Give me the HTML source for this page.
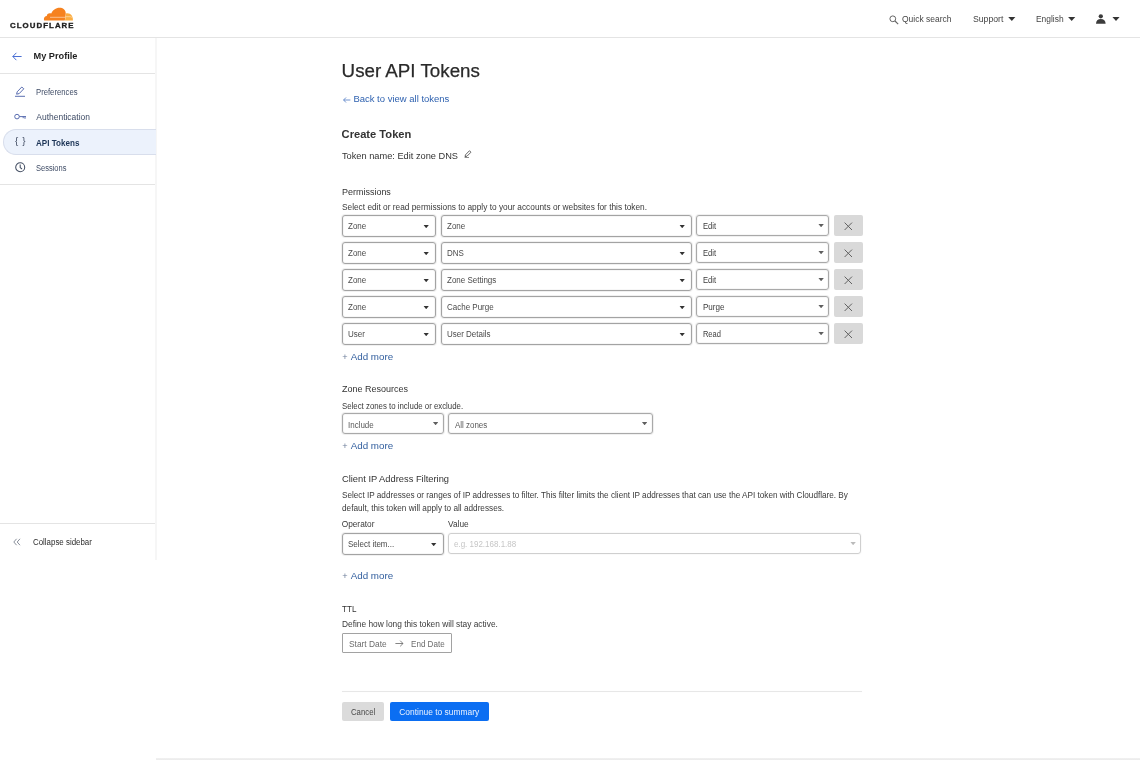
<!DOCTYPE html>
<html>
<head>
<meta charset="utf-8">
<title>User API Tokens</title>
<style>
*{box-sizing:border-box;margin:0;padding:0}
html,body{width:1140px;height:760px;overflow:hidden;background:#fff}
body{font-family:"Liberation Sans",sans-serif;color:#333;position:relative;font-size:8.3px}
.abs{position:absolute;white-space:nowrap;line-height:1}
#wrap{position:absolute;left:0;top:0;width:1140px;height:760px;will-change:transform}
#hdr{position:absolute;left:0;top:0;width:1140px;height:38px;border-bottom:1px solid #e4e4e4;background:#fff}
#side{position:absolute;left:0;top:38px;width:157px;height:522px;border-right:2px solid #f6f6f6;background:#fff}
.hl{position:absolute;left:0;width:155px;height:1px;background:#e4e4e4}
#active{position:absolute;left:3px;top:129px;width:153px;height:26px;border-radius:13px 0 0 13px;background:#ecf2fc;border:1px solid #d8deec;border-right:none}
.tri{position:absolute;width:8px;height:4.4px;background:#333;clip-path:polygon(0 0,100% 0,50% 100%)}
.sel{position:absolute;height:22px;border:1px solid #a3a3a3;border-radius:3px;background:#fff;box-shadow:0 0 0 1px rgba(0,0,0,0.06),inset 0 0 0 1px rgba(0,0,0,0.03)}
.sel span{position:absolute;left:4.8px;top:6.0px;font-size:8.9px;line-height:1;color:#4a4a4a;white-space:nowrap;transform:scaleX(0.9);transform-origin:0 0}
.sel i{position:absolute;right:5.8px;top:8.6px;width:6px;height:3.7px;background:#333;clip-path:polygon(0 0,100% 0,50% 100%)}
.sel.s3{height:21px;border-color:#a9a9a9}
.sel.s3 span{color:#5a5a5a;top:7.2px}
.sel.s3 i{right:4.2px;top:7.9px;width:5.4px;height:3.3px;background:#5e5e5e}
.sel.inp{border-color:#cfcfcf;box-shadow:0 0 0 1px rgba(0,0,0,0.02)}
.sel.s3.inp span{color:#c6c6c6;top:6.2px}
.sel.inp i{background:#bbb}
.xb{position:absolute;left:834.2px;width:28.4px;height:21px;background:#d9d9d9;border-radius:2px}
.xb svg{position:absolute;left:9.9px;top:6.8px}
#date{position:absolute;left:342px;top:633px;width:110px;height:20px;border:1px solid #a2a2a2;border-radius:1px;background:#fff}
#date span{position:absolute;font-size:8.3px;color:#6c6c6c;line-height:1;white-space:nowrap}
.btn{position:absolute;height:19px;border-radius:2px}
.btn span{position:absolute;top:5.6px;line-height:1;white-space:nowrap}
</style>
</head>
<body>
<div id="wrap">
<div id="hdr">
<svg class="abs" style="left:43px;top:7px" width="31" height="14" viewBox="0 0 31 14">
<path d="M1.2 13.6 C0.2 11.2 1.6 9 3.8 8.9 C3.9 6.8 6.2 5.6 8.2 6.6 C9.6 2.4 14.8 -0.5 19 1.1 C22 2.3 23.2 5.2 22.6 8 L21.8 13.6 Z" fill="#f6821f"/>
<path d="M23 6.5 C27.4 5.6 30.2 9 29.9 13.6 L22 13.6 Z" fill="#fbad41"/>
<path d="M7 10.3 L22 10.3" stroke="#fff" stroke-width="0.7" opacity="0.7"/>
<path d="M22.5 9.7 L27.5 9.7 L29 10.4" fill="none" stroke="#fff" stroke-width="0.6" opacity="0.7"/>
</svg>
<div class="abs" style="left:10.1px;top:22.1px;font-size:7.0px;color:#1d1d1d;font-weight:700;letter-spacing:0.95px;transform:scaleX(1.12);transform-origin:0 0;-webkit-text-stroke:0.3px #1d1d1d">CLOUDFLARE</div>

<svg class="abs" style="left:889px;top:15px" width="10" height="10" viewBox="0 0 10 10"><circle cx="3.8" cy="3.8" r="2.9" fill="none" stroke="#666" stroke-width="1"/><path d="M6 6 L9.2 9.2" stroke="#666" stroke-width="1.1"/></svg>
<div class="abs" style="left:902px;top:15.4px;font-size:9.0px;color:#444;transform:scaleX(0.941);transform-origin:0 0">Quick search</div>
<div class="abs" style="left:973.3px;top:15.4px;font-size:9.1px;color:#444;transform:scaleX(0.955);transform-origin:0 0">Support</div>
<div class="tri" style="left:1007.8px;top:16.6px"></div><div class="abs" style="left:1036px;top:15.3px;font-size:9.2px;color:#444;transform:scaleX(0.915);transform-origin:0 0">English</div>
<div class="tri" style="left:1067.7px;top:16.6px"></div>
<svg class="abs" style="left:1096.2px;top:14.2px" width="10" height="10" viewBox="0 0 10 10"><circle cx="4.8" cy="2.3" r="2.15" fill="#3c3c3c"/><path d="M0 9.8 C0 6.6 1.8 4.9 4.8 4.9 C7.8 4.9 9.6 6.6 9.6 9.8 Z" fill="#3c3c3c"/></svg>
<div class="tri" style="left:1112px;top:16.6px"></div>
</div>
<div id="side"></div>
<div class="hl" style="top:73px"></div>
<div class="hl" style="top:184px"></div>
<div class="hl" style="top:523px"></div>
<svg class="abs" style="left:12px;top:51.5px" width="10" height="9" viewBox="0 0 10 9"><path d="M9.6 4.5 L0.8 4.5 M4.4 0.8 L0.8 4.5 L4.4 8.2" fill="none" stroke="#4a6fd3" stroke-width="1"/></svg>
<div class="abs" style="left:33.5px;top:52.3px;font-size:9.2px;color:#1f1f1f;font-weight:700">My Profile</div>

<svg class="abs" style="left:15px;top:86px" width="10" height="11" viewBox="0 0 10 11"><path d="M1.6 8.2 L2.2 5.8 L6.8 1 L8.8 2.8 L4.2 7.6 Z" fill="none" stroke="#4a5fa8" stroke-width="0.9" stroke-linejoin="round"/><path d="M0 10.3 L10 10.3" stroke="#4a5fa8" stroke-width="0.9"/></svg>
<div class="abs" style="left:36.1px;top:87.6px;font-size:8.3px;color:#3f4c66;transform:scaleX(0.928);transform-origin:0 0">Preferences</div>

<svg class="abs" style="left:14px;top:112.5px" width="13" height="8" viewBox="0 0 13 8"><circle cx="3" cy="3.6" r="2.3" fill="none" stroke="#4a5fa8" stroke-width="0.9"/><path d="M5.3 3.6 L12 3.6 M11 3.6 L11 5.8 M9.2 3.6 L9.2 5.2" fill="none" stroke="#4a5fa8" stroke-width="0.9"/></svg>
<div class="abs" style="left:36.3px;top:113.4px;font-size:8.47px;color:#3f4c66">Authentication</div>

<div id="active"></div>
<div class="abs" style="left:15px;top:135.9px;font-size:9.8px;color:#3f4a60;letter-spacing:3.9px">{}</div>
<div class="abs" style="left:36.0px;top:139px;font-size:8.4px;color:#1d3557;font-weight:700;transform:scaleX(0.964);transform-origin:0 0">API Tokens</div>

<svg class="abs" style="left:15px;top:161.7px" width="11" height="11" viewBox="0 0 11 11"><circle cx="5.2" cy="5.2" r="4.5" fill="none" stroke="#434e63" stroke-width="1.05"/><path d="M5.2 2.6 L5.2 5.6 L7 7" fill="none" stroke="#434e63" stroke-width="1.05"/></svg>
<div class="abs" style="left:35.9px;top:163.6px;font-size:8.3px;color:#3f4c66;transform:scaleX(0.905);transform-origin:0 0">Sessions</div>

<svg class="abs" style="left:13px;top:538px" width="8" height="8" viewBox="0 0 8 8"><path d="M3.6 0.8 L0.8 4 L3.6 7.2 M7 0.8 L4.2 4 L7 7.2" fill="none" stroke="#6b7280" stroke-width="0.8"/></svg>
<div class="abs" style="left:33px;top:538px;font-size:8.3px;color:#2b2b2b;transform:scaleX(0.952);transform-origin:0 0">Collapse sidebar</div>
<div id="main">
<div class="abs" style="left:341.6px;top:61.7px;font-size:18.75px;color:#2a2a2a;-webkit-text-stroke:0.25px #2a2a2a">User API Tokens</div>
<svg class="abs" style="left:342.5px;top:96.6px" width="8" height="6" viewBox="0 0 8 6"><path d="M7.4 3 L0.6 3 M3 0.5 L0.6 3 L3 5.5" fill="none" stroke="#4f7ac4" stroke-width="0.8"/></svg>
<div class="abs" style="left:353.4px;top:94.3px;font-size:9.49px;color:#2f62b0">Back to view all tokens</div>
<div class="abs" style="left:341.6px;top:129.1px;font-size:11.15px;color:#333;font-weight:700">Create Token</div>
<div class="abs" style="left:341.5px;top:150.6px;font-size:9.7px;color:#333;transform:scaleX(0.953);transform-origin:0 0">Token name: Edit zone DNS</div>
<svg class="abs" style="left:463.5px;top:150px" width="8" height="8" viewBox="0 0 8 8"><path d="M1 6.6 L1.5 4.8 L5.4 0.8 L7 2.2 L3 6.2 Z" fill="none" stroke="#4a4a4a" stroke-width="0.85" stroke-linejoin="round"/><path d="M0.6 7.6 L5 7.6" stroke="#4a4a4a" stroke-width="0.7"/></svg>
<div class="abs" style="left:341.5px;top:187.1px;font-size:9.4px;color:#333;transform:scaleX(0.957);transform-origin:0 0">Permissions</div>
<div class="abs" style="left:341.7px;top:202.6px;font-size:8.6px;color:#3a3a3a;transform:scaleX(0.966);transform-origin:0 0">Select edit or read permissions to apply to your accounts or websites for this token.</div>
<div class="sel " style="left:342px;top:215px;width:94px"><span>Zone</span><i></i></div><div class="sel " style="left:441px;top:215px;width:251px"><span>Zone</span><i></i></div><div class="sel s3" style="left:696px;top:215px;width:133px"><span><b style="font-weight:400;font-size:8.8px;display:inline-block;transform:scaleX(0.967);transform-origin:0 0;position:relative;top:-1.0px;left:1.3px;color:#3c3c3c">Edit</b></span><i></i></div><div class="xb" style="top:215px"><svg width="9" height="9" viewBox="0 0 9 9"><path d="M0.6 0.6 L8 8 M8 0.6 L0.6 8" stroke="#626262" stroke-width="1.0" fill="none"/></svg></div>
<div class="sel " style="left:342px;top:242px;width:94px"><span>Zone</span><i></i></div><div class="sel " style="left:441px;top:242px;width:251px"><span>DNS</span><i></i></div><div class="sel s3" style="left:696px;top:242px;width:133px"><span><b style="font-weight:400;font-size:8.8px;display:inline-block;transform:scaleX(0.967);transform-origin:0 0;position:relative;top:-1.0px;left:1.3px;color:#3c3c3c">Edit</b></span><i></i></div><div class="xb" style="top:242px"><svg width="9" height="9" viewBox="0 0 9 9"><path d="M0.6 0.6 L8 8 M8 0.6 L0.6 8" stroke="#626262" stroke-width="1.0" fill="none"/></svg></div>
<div class="sel " style="left:342px;top:269px;width:94px"><span>Zone</span><i></i></div><div class="sel " style="left:441px;top:269px;width:251px"><span>Zone Settings</span><i></i></div><div class="sel s3" style="left:696px;top:269px;width:133px"><span><b style="font-weight:400;font-size:8.8px;display:inline-block;transform:scaleX(0.967);transform-origin:0 0;position:relative;top:-1.0px;left:1.3px;color:#3c3c3c">Edit</b></span><i></i></div><div class="xb" style="top:269px"><svg width="9" height="9" viewBox="0 0 9 9"><path d="M0.6 0.6 L8 8 M8 0.6 L0.6 8" stroke="#626262" stroke-width="1.0" fill="none"/></svg></div>
<div class="sel " style="left:342px;top:296px;width:94px"><span>Zone</span><i></i></div><div class="sel " style="left:441px;top:296px;width:251px"><span>Cache Purge</span><i></i></div><div class="sel s3" style="left:696px;top:296px;width:133px"><span><b style="font-weight:400;font-size:8.8px;display:inline-block;transform:scaleX(1.02);transform-origin:0 0;position:relative;top:-1.0px;left:1.3px;color:#3c3c3c">Purge</b></span><i></i></div><div class="xb" style="top:296px"><svg width="9" height="9" viewBox="0 0 9 9"><path d="M0.6 0.6 L8 8 M8 0.6 L0.6 8" stroke="#626262" stroke-width="1.0" fill="none"/></svg></div>
<div class="sel " style="left:342px;top:323px;width:94px"><span>User</span><i></i></div><div class="sel " style="left:441px;top:323px;width:251px"><span>User Details</span><i></i></div><div class="sel s3" style="left:696px;top:323px;width:133px"><span><b style="font-weight:400;font-size:8.8px;display:inline-block;transform:scaleX(0.95);transform-origin:0 0;position:relative;top:-1.0px;left:1.3px;color:#3c3c3c">Read</b></span><i></i></div><div class="xb" style="top:323px"><svg width="9" height="9" viewBox="0 0 9 9"><path d="M0.6 0.6 L8 8 M8 0.6 L0.6 8" stroke="#626262" stroke-width="1.0" fill="none"/></svg></div>
<div class="abs" style="left:342.2px;top:353.0px;font-size:9.2px;color:#70809c">+</div>
<div class="abs" style="left:350.7px;top:351.6px;font-size:9.8px;color:#34609f">Add more</div>
<div class="abs" style="left:341.6px;top:384.2px;font-size:9.5px;color:#333;transform:scaleX(0.947);transform-origin:0 0">Zone Resources</div>
<div class="abs" style="left:341.7px;top:401.6px;font-size:8.6px;color:#3a3a3a;transform:scaleX(0.912);transform-origin:0 0">Select zones to include or exclude.</div>
<div class="sel s3" style="left:342px;top:413px;width:101.5px"><span>Include</span><i></i></div><div class="sel s3" style="left:448px;top:413px;width:204.5px"><span><b style="font-weight:400;position:relative;left:1px;top:-0.4px">All zones</b></span><i></i></div><div class="abs" style="left:342.2px;top:442.0px;font-size:9.2px;color:#70809c">+</div>
<div class="abs" style="left:350.7px;top:440.6px;font-size:9.8px;color:#34609f">Add more</div>
<div class="abs" style="left:341.6px;top:474.2px;font-size:9.8px;color:#333;transform:scaleX(0.951);transform-origin:0 0">Client IP Address Filtering</div>
<div class="abs" style="left:341.7px;top:491.0px;font-size:8.6px;color:#3a3a3a;transform:scaleX(0.951);transform-origin:0 0">Select IP addresses or ranges of IP addresses to filter. This filter limits the client IP addresses that can use the API token with Cloudflare. By</div>
<div class="abs" style="left:341.7px;top:504.0px;font-size:8.6px;color:#3a3a3a;transform:scaleX(0.956);transform-origin:0 0">default, this token will apply to all addresses.</div>
<div class="abs" style="left:341.7px;top:520px;font-size:8.3px;color:#3a3a3a">Operator</div>
<div class="abs" style="left:448px;top:520px;font-size:8.3px;color:#3a3a3a">Value</div>
<div class="sel " style="left:342px;top:533px;width:101.5px"><span>Select item...</span><i></i></div><div class="sel s3 inp" style="left:448px;top:533px;width:413px"><span>e.g. 192.168.1.88</span><i></i></div><div class="abs" style="left:342.2px;top:572.0px;font-size:9.2px;color:#70809c">+</div>
<div class="abs" style="left:350.7px;top:570.5999999999999px;font-size:9.8px;color:#34609f">Add more</div>
<div class="abs" style="left:341.7px;top:604.6px;font-size:9.2px;color:#333;transform:scaleX(0.88);transform-origin:0 0">TTL</div>
<div class="abs" style="left:341.7px;top:619.8px;font-size:8.6px;color:#3a3a3a;transform:scaleX(0.971);transform-origin:0 0">Define how long this token will stay active.</div>
<div id="date"><span style="left:6.3px;top:5.8px;font-size:8.6px;transform:scaleX(0.975);transform-origin:0 0">Start Date</span><svg style="position:absolute;left:51.6px;top:6px" width="9" height="7" viewBox="0 0 9 7"><path d="M0.4 3.5 L8 3.5 M5.2 0.7 L8 3.5 L5.2 6.3" fill="none" stroke="#666" stroke-width="0.8"/></svg><span style="left:68.0px;top:5.8px;font-size:8.6px;transform:scaleX(0.94);transform-origin:0 0">End Date</span></div>
<div class="hl" style="left:342px;top:691px;width:520px;background:#e7e7e7;box-shadow:0 0 1px #eee"></div>
<div class="btn" style="left:342px;top:702px;width:42px;background:#dbdbdb"><span style="left:9.0px;top:5.8px;font-size:8.8px;color:#484848;transform:scaleX(0.885);transform-origin:0 0">Cancel</span></div>
<div class="btn" style="left:389.7px;top:702px;width:99.2px;background:#0b6ef2"><span style="left:9.6px;font-size:8.42px;color:#eaf2ff">Continue to summary</span></div>
<div class="hl" style="left:156px;top:758px;width:984px;height:2px;background:linear-gradient(#f1f1f1,#ebebeb)"></div>
</div>
</div>
</body>
</html>
